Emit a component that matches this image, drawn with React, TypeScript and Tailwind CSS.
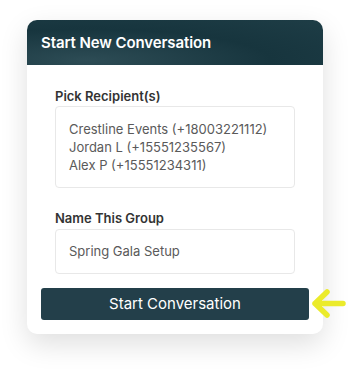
const recipients = [
  'Crestline Events (+18003221112)',
  'Jordan L (+15551235567)',
  'Alex P (+15551234311)',
]

const ArrowLeft = () => (
  <svg width="37" height="32" viewBox="0 0 37 32" fill="none">
    <path
      d="M33 15.5H5M17 4L5 15.5L17 27"
      stroke="#ebeb2b"
      strokeWidth="5.5"
      strokeLinecap="round"
      strokeLinejoin="round"
    />
  </svg>
)

export default function App() {
  return (
    <div
      className="w-[350px] h-[369px] bg-white relative"
      style={{ fontFamily: 'Inter, "Noto Sans", sans-serif' }}
    >
      <div className="absolute left-[27px] top-[20px] w-[296px] rounded-[10px] bg-white shadow-[0_10px_28px_rgba(0,0,0,0.13)]">
        <div className="h-[45px] rounded-t-[10px] bg-[radial-gradient(ellipse_at_20%_90%,#2d4c55_0%,#17353e_55%,#1e3d46_100%)] flex items-center px-[14px]">
          <span className="text-white text-[15px] font-semibold tracking-[-0.1px] pt-[2px]">
            Start New Conversation
          </span>
        </div>
        <div className="px-[14px] pt-[23px] pb-[14px]">
          <div className="px-[14px]">
            <div className="text-[13px] leading-[16px] font-semibold text-[#333]">
              Pick Recipient(s)
            </div>
            <div className="mt-[2px] h-[82px] border border-[#e8e8e8] rounded-[4px] px-[13px] py-[13px] text-[13px] leading-[18px] text-[#5a5a5a] whitespace-nowrap">
              {recipients.map((r) => (
                <div key={r}>{r}</div>
              ))}
            </div>
            <div className="mt-[22px] text-[13px] leading-[16px] font-semibold text-[#333]">
              Name This Group
            </div>
            <div className="mt-[3px] h-[45px] border border-[#e8e8e8] rounded-[4px] px-[13px] flex items-center text-[13px] text-[#5a5a5a]">
              Spring Gala Setup
            </div>
          </div>
          <div className="relative mt-[14px]">
            <button className="w-full h-[32px] rounded-[3px] bg-[#233f4a] text-white text-[15px] flex items-center justify-center">
              Start Conversation
            </button>
            <div className="absolute left-[269px] top-0">
              <ArrowLeft />
            </div>
          </div>
        </div>
      </div>
    </div>
  )
}
